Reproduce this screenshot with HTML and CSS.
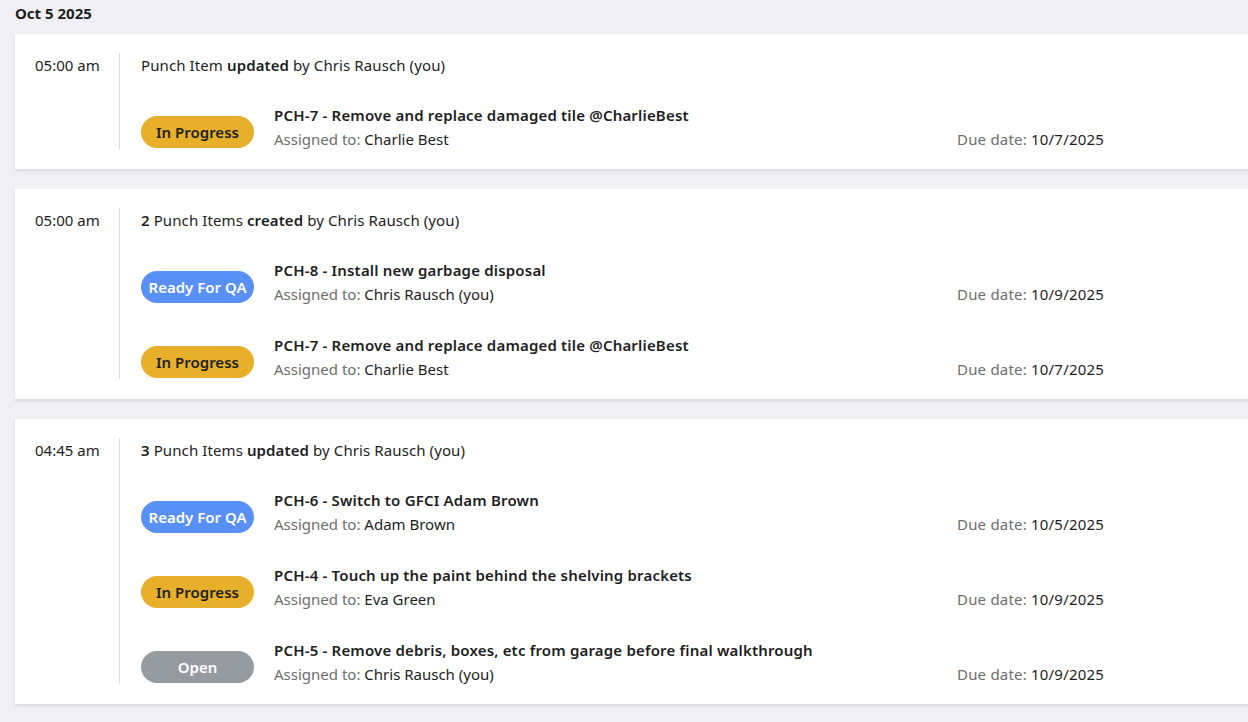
FILE: index.html
```html
<!DOCTYPE html>
<html>
<head>
<meta charset="utf-8">
<link rel="stylesheet" href="styles.css">
</head>
<body>
<div class="day">Oct 5 2025</div>

<div class="card">
  <div class="time">05:00 am</div>
  <div class="content">
    <div class="header">Punch Item <b>updated</b> by Chris Rausch (you)</div>
    <div class="item">
      <span class="pill progress">In Progress</span>
      <div class="info">
        <div class="title">PCH-7 - Remove and replace damaged tile @CharlieBest</div>
        <div class="meta"><span class="assigned"><span class="lbl">Assigned to:</span> Charlie Best</span><span class="due"><span class="lbl">Due date:</span> 10/7/2025</span></div>
      </div>
    </div>
  </div>
</div>

<div class="card">
  <div class="time">05:00 am</div>
  <div class="content">
    <div class="header"><b>2</b> Punch Items <b>created</b> by Chris Rausch (you)</div>
    <div class="item">
      <span class="pill qa">Ready For QA</span>
      <div class="info">
        <div class="title">PCH-8 - Install new garbage disposal</div>
        <div class="meta"><span class="assigned"><span class="lbl">Assigned to:</span> Chris Rausch (you)</span><span class="due"><span class="lbl">Due date:</span> 10/9/2025</span></div>
      </div>
    </div>
    <div class="item">
      <span class="pill progress">In Progress</span>
      <div class="info">
        <div class="title">PCH-7 - Remove and replace damaged tile @CharlieBest</div>
        <div class="meta"><span class="assigned"><span class="lbl">Assigned to:</span> Charlie Best</span><span class="due"><span class="lbl">Due date:</span> 10/7/2025</span></div>
      </div>
    </div>
  </div>
</div>

<div class="card">
  <div class="time">04:45 am</div>
  <div class="content">
    <div class="header"><b>3</b> Punch Items <b>updated</b> by Chris Rausch (you)</div>
    <div class="item">
      <span class="pill qa">Ready For QA</span>
      <div class="info">
        <div class="title">PCH-6 - Switch to GFCI Adam Brown</div>
        <div class="meta"><span class="assigned"><span class="lbl">Assigned to:</span> Adam Brown</span><span class="due"><span class="lbl">Due date:</span> 10/5/2025</span></div>
      </div>
    </div>
    <div class="item">
      <span class="pill progress">In Progress</span>
      <div class="info">
        <div class="title">PCH-4 - Touch up the paint behind the shelving brackets</div>
        <div class="meta"><span class="assigned"><span class="lbl">Assigned to:</span> Eva Green</span><span class="due"><span class="lbl">Due date:</span> 10/9/2025</span></div>
      </div>
    </div>
    <div class="item">
      <span class="pill open">Open</span>
      <div class="info">
        <div class="title">PCH-5 - Remove debris, boxes, etc from garage before final walkthrough</div>
        <div class="meta"><span class="assigned"><span class="lbl">Assigned to:</span> Chris Rausch (you)</span><span class="due"><span class="lbl">Due date:</span> 10/9/2025</span></div>
      </div>
    </div>
  </div>
</div>
</body>
</html>
```

FILE: styles.css
```css
html, body {
  margin: 0;
  padding: 0;
}
body {
  background: #f0f0f4;
  font-family: "Noto Sans", "Open Sans", sans-serif;
  font-size: 15px;
  color: #1e1e1e;
  width: 1260px;
  overflow: hidden;
  height: 722px;
}
.day {
  font-weight: bold;
  font-size: 15px;
  padding: 2px 0 0 15px;
  height: 32px;
  line-height: 22px;
}
.card {
  margin-left: 15px;
  margin-bottom: 20px;
  background: #fff;
  display: flex;
  padding: 19px 0 20px 0;
  box-shadow: 0 2px 3px rgba(0,0,0,0.10);
}
.time {
  width: 105px;
  flex: none;
  padding-left: 20px;
  box-sizing: border-box;
  line-height: 24px;
  white-space: nowrap;
  border-right: 1px solid #dcdcdc;
}
.content {
  padding-left: 21px;
}
.header {
  line-height: 24px;
  letter-spacing: 0.1px;
}
.header b { font-weight: 600; }
.item {
  display: flex;
  margin-top: 26px;
  height: 46px;
}
.item + .item {
  margin-top: 29px;
}
.pill {
  align-self: flex-end;
  margin-bottom: 1px;
  width: 113px;
  height: 32px;
  border-radius: 16px;
  box-sizing: border-box;
  display: flex;
  align-items: center;
  justify-content: center;
  font-weight: 600;
  font-size: 15px;
  margin-right: 20px;
  flex: none;
}
.progress { background: #e8b02a; color: #1f1f1f; }
.qa { background: #5890f8; color: #fff; }
.open { background: #959b9f; color: #fff; }
.title {
  font-weight: 600;
  line-height: 24px;
  letter-spacing: 0.18px;
}
.meta {
  display: flex;
  line-height: 22px;
  padding-top: 1px;
}
.assigned {
  width: 683px;
  flex: none;
}
.due { white-space: nowrap; letter-spacing: 0.2px; }
.lbl { color: #6e6e6e; }
```
